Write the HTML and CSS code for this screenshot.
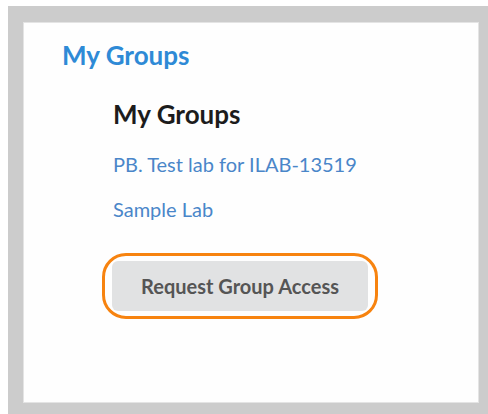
FILE: index.html
```html
<!DOCTYPE html>
<html lang="en">
<head>
<meta charset="utf-8">
<title>My Groups</title>
<link rel="stylesheet" href="styles.css">
</head>
<body>
  <div class="frame">
    <section class="panel">
      <h2 class="panel-title">My Groups</h2>
      <div class="groups">
        <h3 class="groups-title">My Groups</h3>
        <ul class="group-list">
          <li><a href="#">PB. Test lab for ILAB-13519</a></li>
          <li><a href="#">Sample Lab</a></li>
        </ul>
        <span class="focus-ring">
          <button class="request-btn" type="button">Request Group Access</button>
        </span>
      </div>
    </section>
  </div>
</body>
</html>
```
FILE: styles.css
```css
html, body {
  margin: 0;
  background: #ffffff;
  font-family: Lato, "Open Sans", "Liberation Sans", sans-serif;
}

body {
  padding: 6px 0 0 8px;
  height: 414px;
  box-sizing: border-box;
  overflow: hidden;
}

.frame {
  background: #cccccc;
  width: 480px;
  height: 408px;
  box-sizing: border-box;
  padding: 16px 9px 11px 15px;
}

.panel {
  background: #fefefe;
  border: 1px solid #e4e4e4;
  height: 100%;
  box-sizing: border-box;
  padding: 17px 0 0 38px;
}

.panel-title {
  margin: 0;
  font-size: 26px;
  line-height: 31px;
  font-weight: 700;
  color: #2e8ad6;
}

.groups {
  padding: 28px 0 0 51px;
}

.groups-title {
  margin: 0;
  font-size: 26px;
  line-height: 31px;
  font-weight: 700;
  color: #1c1c1c;
}

.group-list {
  list-style: none;
  margin: 22px 0 0;
  padding: 0;
  display: flex;
  flex-direction: column;
  gap: 21px;
}

.group-list a {
  display: block;
  font-size: 20px;
  line-height: 24px;
  color: #4a86c9;
  text-decoration: none;
}

.focus-ring {
  display: inline-flex;
  margin: 32px 0 0 -11px;
  padding: 5px 7px;
  border: 3px solid #f7830f;
  border-radius: 24px;
}

.request-btn {
  width: 256px;
  height: 50px;
  border: 0;
  border-radius: 6px;
  background: #e1e2e3;
  color: #555555;
  font-family: inherit;
  font-size: 20px;
  font-weight: 700;
  cursor: pointer;
}
```
